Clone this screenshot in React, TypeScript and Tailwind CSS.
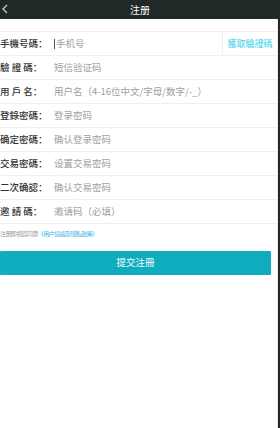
const FONT = "font-['Noto_Sans_CJK_SC','Noto_Sans',sans-serif]";

const rows = [
  { label: "手機号碼：", placeholder: "手机号" },
  { label: "驗 證 碼：", placeholder: "短信验证码" },
  { label: "用 戶 名：", placeholder: "用户名（4-16位中文/字母/数字/-_）" },
  { label: "登錄密碼：", placeholder: "登录密码" },
  { label: "确定密碼：", placeholder: "确认登录密码" },
  { label: "交易密碼：", placeholder: "设置交易密码" },
  { label: "二次确認：", placeholder: "确认交易密码" },
  { label: "邀 請 碼：", placeholder: "邀请码（必填）" },
];

export default function App() {
  return (
    <div className={`w-[280px] h-[428px] flex flex-col bg-white ${FONT}`}>
      <header className="h-[19px] shrink-0 bg-[#1f2928] relative flex items-center justify-center">
        <svg className="absolute left-[2px] top-[4px]" width="6" height="10" viewBox="0 0 6 10">
          <path d="M5 1 L1 5 L5 9" fill="none" stroke="#c8cccc" strokeWidth="1.3" />
        </svg>
        <span className="text-white text-[10px] leading-none">注册</span>
      </header>
      <div className="flex flex-1">
        <main className="flex-1 border-r border-[#ececec] pt-[12px]">
          <div className="border-t border-[#efefef]">
            {rows.map((r, i) => (
              <div key={i} className="h-[24px] flex items-center border-b border-[#efefef]">
                <div className="w-[54px] shrink-0 text-[9.5px] text-[#333] font-medium whitespace-pre leading-none">
                  {r.label}
                </div>
                <div className="flex-1 flex items-center text-[9.5px] text-[#a0a0a0] leading-none">
                  {i === 0 && <span className="w-px h-[10px] bg-[#555] mr-px" />}
                  {r.placeholder}
                </div>
                {i === 0 && (
                  <div className="h-full w-[55px] border-l border-[#efefef] flex items-center justify-center text-[9px] text-[#2fd0ea] leading-none">
                    獲取驗證碼
                  </div>
                )}
              </div>
            ))}
          </div>
          <p className="mt-[7px] text-[6px] tracking-[-0.6px] leading-none text-[#999] whitespace-nowrap">
            注册即視爲同意<span className="text-[#3bb3e8]">《用户協議及隱私政策》</span>
          </p>
          <button className="mt-[14px] w-[271px] h-[24px] bg-[#10adbe] text-white text-[9.5px] leading-none flex items-center justify-center rounded-[1px]">
            提交注冊
          </button>
        </main>
        <div className="w-[2px] bg-[#262626]" />
      </div>
    </div>
  );
}
